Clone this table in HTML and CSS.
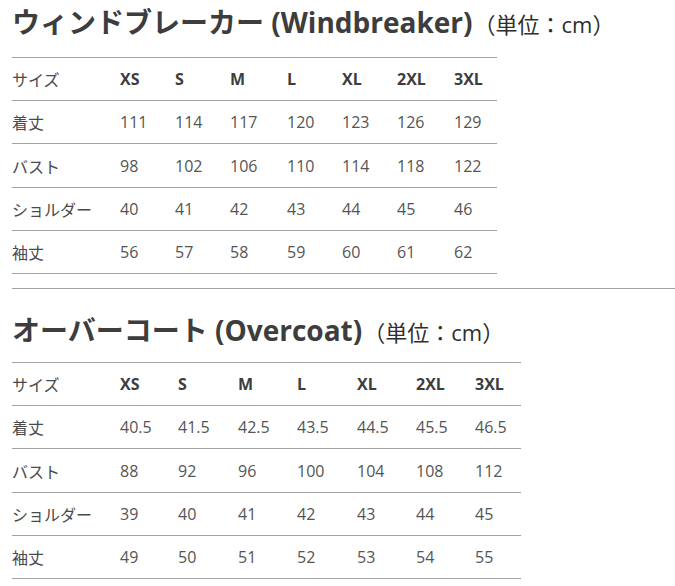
FILE: index.html
```html
<!DOCTYPE html>
<html lang="ja">
<head>
<meta charset="utf-8">
<title>サイズ表</title>
<link rel="stylesheet" href="styles.css">
</head>
<body>
<section class="block">
  <h2 class="title">ウィンドブレーカー (Windbreaker)<span class="unit">（単位：cm）</span></h2>
  <table class="size-table">
    <colgroup>
      <col class="w108"><col class="w55"><col class="w55"><col class="w57"><col class="w55"><col class="w55"><col class="w57"><col class="w43">
    </colgroup>
    <thead>
      <tr><th class="label">サイズ</th><th>XS</th><th>S</th><th>M</th><th>L</th><th>XL</th><th>2XL</th><th>3XL</th></tr>
    </thead>
    <tbody>
      <tr><td class="label">着丈</td><td>111</td><td>114</td><td>117</td><td>120</td><td>123</td><td>126</td><td>129</td></tr>
      <tr><td class="label">バスト</td><td>98</td><td>102</td><td>106</td><td>110</td><td>114</td><td>118</td><td>122</td></tr>
      <tr><td class="label">ショルダー</td><td>40</td><td>41</td><td>42</td><td>43</td><td>44</td><td>45</td><td>46</td></tr>
      <tr><td class="label">袖丈</td><td>56</td><td>57</td><td>58</td><td>59</td><td>60</td><td>61</td><td>62</td></tr>
    </tbody>
  </table>
</section>
<hr class="divider">
<section class="block block-second">
  <h2 class="title">オーバーコート (Overcoat)<span class="unit">（単位：cm）</span></h2>
  <table class="size-table">
    <colgroup>
      <col class="w108"><col class="w58"><col class="w60"><col class="w59"><col class="w60"><col class="w59"><col class="w59"><col class="w46">
    </colgroup>
    <thead>
      <tr><th class="label">サイズ</th><th>XS</th><th>S</th><th>M</th><th>L</th><th>XL</th><th>2XL</th><th>3XL</th></tr>
    </thead>
    <tbody>
      <tr><td class="label">着丈</td><td>40.5</td><td>41.5</td><td>42.5</td><td>43.5</td><td>44.5</td><td>45.5</td><td>46.5</td></tr>
      <tr><td class="label">バスト</td><td>88</td><td>92</td><td>96</td><td>100</td><td>104</td><td>108</td><td>112</td></tr>
      <tr><td class="label">ショルダー</td><td>39</td><td>40</td><td>41</td><td>42</td><td>43</td><td>44</td><td>45</td></tr>
      <tr><td class="label">袖丈</td><td>49</td><td>50</td><td>51</td><td>52</td><td>53</td><td>54</td><td>55</td></tr>
    </tbody>
  </table>
</section>
</body>
</html>
```
FILE: styles.css
```css
html, body {
  margin: 0;
  padding: 0;
  background: #ffffff;
}
body {
  font-family: "Open Sans", "Noto Sans CJK JP", sans-serif;
  color: #444444;
  overflow: hidden;
}
.block {
  padding-left: 12px;
}
.title {
  margin: 0 0 13px 0;
  height: 44px;
  line-height: 44px;
  font-size: 28px;
  font-weight: 700;
  color: #3d3d3d;
  white-space: nowrap;
}
.unit {
  font-size: 22px;
  font-weight: 400;
  margin-left: 1px;
  color: #2e2e2e;
}
.block-second .title {
  margin-top: 19px;
  margin-bottom: 10px;
}
.size-table {
  border-collapse: collapse;
  table-layout: fixed;
  border-top: 1px solid #a3a3a3;
}
.size-table th,
.size-table td {
  height: 42px;
  padding: 0;
  border-bottom: 1px solid #a3a3a3;
  text-align: left;
  vertical-align: middle;
  font-size: 16px;
  white-space: nowrap;
}
.size-table tbody tr:nth-child(2) td {
  height: 43px;
}
.size-table th {
  font-weight: 700;
  color: #3d3d3d;
}
.size-table td {
  color: #555555;
}
.size-table .label {
  font-weight: 400;
  color: #4a4a4a;
}
.divider {
  margin: 14px 0 0 12px;
  border: 0;
  border-top: 1px solid #a3a3a3;
  height: 0;
}
.w108 { width: 108px; }
.w43 { width: 43px; }
.w46 { width: 46px; }
.w55 { width: 55px; }
.w57 { width: 57px; }
.w58 { width: 58px; }
.w59 { width: 59px; }
.w60 { width: 60px; }
```
